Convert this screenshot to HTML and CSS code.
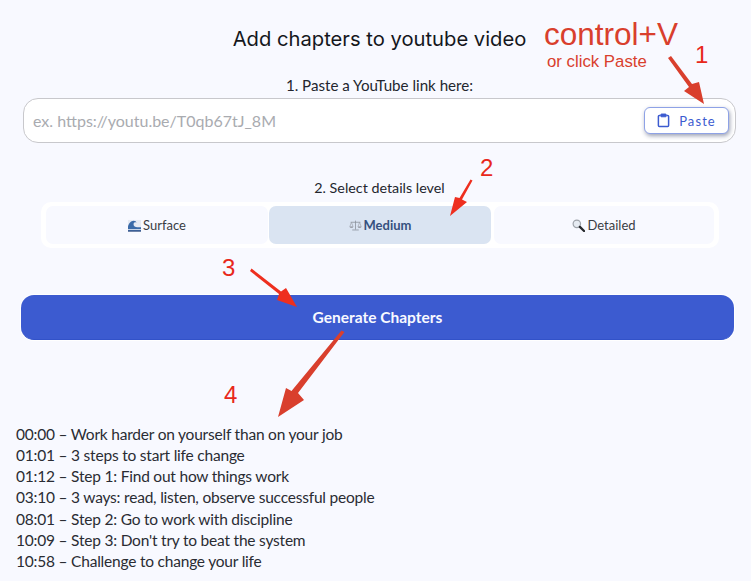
FILE: index.html
```html
<!DOCTYPE html>
<html lang="en">
<head>
<meta charset="utf-8">
<title>Add chapters to youtube video</title>
<link rel="stylesheet" href="styles.css">
</head>
<body>
<main class="page">
  <h1 class="title">Add chapters to youtube video</h1>
  <p class="label label-link">1. Paste a YouTube link here:</p>
  <div class="link-box">
    <span class="placeholder">ex. https://youtu.be/T0qb67tJ_8M</span>
    <button class="paste">
      <svg class="paste-icon" viewBox="0 0 14 16" width="13" height="15" aria-hidden="true">
        <path d="M4 2.500H2.500a1 1 0 0 0-1 1v10a1 1 0 0 0 1 1h9a1 1 0 0 0 1-1v-10a1 1 0 0 0-1-1H10" fill="none" stroke="#3c5bd0" stroke-width="1.600"/>
        <rect x="4.200" y="1" width="5.600" height="3" rx=".6" fill="#3c5bd0" stroke="#3c5bd0" stroke-width="1"/>
      </svg>
      <span>Paste</span>
    </button>
  </div>
  <p class="label label-level">2. Select details level</p>
  <div class="levels">
    <div class="level">
      <svg class="emoji" viewBox="0 0 14 14" aria-hidden="true">
        <rect x="0" y="1" width="14" height="12" fill="#e6eaf3"/>
        <path d="M0 13V8c1-3 3-6 6-6 2 0 3 1 3 2-2-1-3 0-3 2 0 2 2 3 4 3h4v4z" fill="#3a6aa8"/>
        <path d="M0 11.500h14" stroke="#f3f5fa" stroke-width="1"/>
        <path d="M0 13h14" stroke="#1f3f78" stroke-width="1.200"/>
      </svg>
      <span>Surface</span>
    </div>
    <div class="level level-on">
      <svg class="emoji" viewBox="0 0 16 14" aria-hidden="true">
        <path d="M8 1v11M4 12.500h8M2 3h12" stroke="#8d929c" stroke-width="1" fill="none"/>
        <path d="M3 3 1 8.500h4zM13 3l-2 5.500h4z" fill="none" stroke="#9a9fa8" stroke-width=".8"/>
        <path d="M.8 8.500a2.200 1.600 0 0 0 4.400 0zM10.800 8.500a2.200 1.600 0 0 0 4.400 0z" fill="#9a9fa8"/>
      </svg>
      <span>Medium</span>
    </div>
    <div class="level">
      <svg class="emoji" viewBox="0 0 14 14" aria-hidden="true">
        <circle cx="5.200" cy="5.200" r="4" fill="#e6ebf2" stroke="#9ea3aa" stroke-width="1.300"/>
        <path d="M8.500 8.500 13 13" stroke="#26282c" stroke-width="2.400" stroke-linecap="round"/>
      </svg>
      <span>Detailed</span>
    </div>
  </div>
  <button class="generate">Generate Chapters</button>
  <ul class="chapters">
    <li>00:00 – Work harder on yourself than on your job</li>
    <li>01:01 – 3 steps to start life change</li>
    <li>01:12 – Step 1: Find out how things work</li>
    <li>03:10 – 3 ways: read, listen, observe successful people</li>
    <li>08:01 – Step 2: Go to work with discipline</li>
    <li>10:09 – Step 3: Don't try to beat the system</li>
    <li>10:58 – Challenge to change your life</li>
  </ul>
</main>

<svg class="arrows" viewBox="0 0 751 581" width="751" height="581" aria-hidden="true">
  <polygon class="dark" points="668,58 671,56 692,84 699,82 704,104 684,91 689,87"/>
  <polygon class="bright" points="470.500,179.500 472.500,180.500 462,199.500 467,202 450,216 455,197 459.500,198"/>
  <polygon class="bright" points="250,271 251.500,268.500 281,291.500 286,288 297,307 277,300 279,294"/>
  <polygon class="dark" points="341.500,330.500 344.500,332 298,393 304,400 278,417 286,388 291.500,391"/>
</svg>
<div class="note note-key">control+V</div>
<div class="note note-click">or click Paste</div>
<div class="num num-1">1</div>
<div class="num num-2">2</div>
<div class="num num-3">3</div>
<div class="num num-4">4</div>
</body>
</html>
```
FILE: styles.css
```css
* { box-sizing: border-box; }
html, body { margin: 0; padding: 0; }
body {
  width: 751px;
  height: 581px;
  overflow: hidden;
  position: relative;
  background: #f8f9ff;
  color: #23262e;
  font-family: Lato, "Liberation Sans", sans-serif;
}
.page { display: flex; flex-direction: column; height: 581px; }
.title {
  margin: 27px 0 0 8px;
  font: 400 20.200px/24px Inter, "Liberation Sans", sans-serif;
  color: #15171c;
  text-align: center;
}
.label {
  margin: 0;
  line-height: 18px;
  text-align: center;
  color: #23262e;
}
.label-link { margin: 25px 0 0 8px; font-size: 15.150px; }
.link-box {
  margin: 4px 15px 0 23px;
  height: 45px;
  display: flex;
  align-items: center;
  justify-content: space-between;
  padding: 0 6px 0 9px;
  background: #fff;
  border: 1px solid #c8c8cc;
  border-radius: 15px;
}
.placeholder { font-size: 16px; color: #a9abb0; }
.paste {
  width: 85px;
  height: 27px;
  display: flex;
  align-items: center;
  justify-content: center;
  gap: 9px;
  padding: 0;
  background: #fff;
  border: 1px solid #8ea2e6;
  border-radius: 6px;
  box-shadow: 1px 2px 4px rgba(40, 50, 90, .45);
  font: 400 13px/16px Lato, "Liberation Sans", sans-serif;
  letter-spacing: 1.100px;
  color: #3c5bd0;
}
.paste-icon { display: block; }
.label-level { margin: 36px 0 0 8px; font-size: 14.300px; }
.levels {
  margin: 5px 32px 0 41px;
  height: 46px;
  padding: 4px 3px 4px 5px;
  display: grid;
  grid-template-columns: 222px 222px 222px;
  column-gap: 1px;
  background: #fff;
  border-radius: 10px;
}
.levels .level:last-child { margin-left: 2px; }
.level {
  display: flex;
  align-items: center;
  justify-content: center;
  gap: 2px;
  background: #f8f9ff;
  border-radius: 7px;
  font-size: 13px;
  color: #3a3d44;
}
.level-on { background: #dae4f2; color: #35507e; font-weight: 700; }
.emoji { width: 13px; height: 13px; display: block; }
.generate {
  margin: 47px 17px 0 21px;
  height: 45px;
  background: #3c5bd0;
  border: 0;
  border-bottom: 1px solid #3252c8;
  border-radius: 13px;
  box-shadow: 0 0 0 1px #fff;
  color: #f8f9ff;
  font: 700 15.500px/18px Lato, "Liberation Sans", sans-serif;
}
.chapters {
  list-style: none;
  margin: 83.500px 0 0 16px;
  padding: 0;
  font-size: 15.500px;
  letter-spacing: -.21px;
  line-height: 21.300px;
  color: #2a2c33;
}
.arrows { position: absolute; left: 0; top: 0; pointer-events: none; }
.dark { fill: #d93f2d; }
.bright { fill: #ee2f1f; }
.note, .num {
  position: absolute;
  font-family: "Liberation Sans", sans-serif;
  white-space: nowrap;
}
.note { color: #d93f2d; }
.note-key { left: 544px; top: 16px; font-size: 31.500px; line-height: 36px; }
.note-click { left: 547px; top: 53px; font-size: 16.800px; line-height: 18px; }
.num { color: #e8281b; font-size: 24px; line-height: 26px; }
.num-1 { left: 695px; top: 42px; }
.num-2 { left: 480px; top: 155px; }
.num-3 { left: 222px; top: 255px; }
.num-4 { left: 224px; top: 382px; }
```
